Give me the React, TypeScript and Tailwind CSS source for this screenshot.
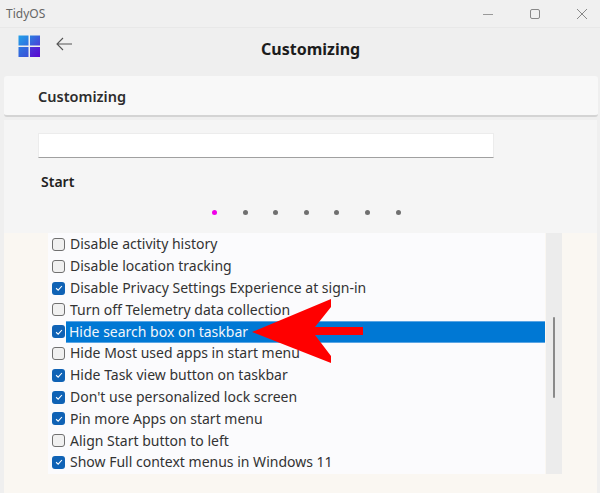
const rows: [string, boolean][] = [
  ["Disable activity history", false],
  ["Disable location tracking", false],
  ["Disable Privacy Settings Experience at sign-in", true],
  ["Turn off Telemetry data collection", false],
  ["Hide search box on taskbar", true],
  ["Hide Most used apps in start menu", false],
  ["Hide Task view button on taskbar", true],
  ["Don't use personalized lock screen", true],
  ["Pin more Apps on start menu", true],
  ["Align Start button to left", false],
  ["Show Full context menus in Windows 11", true],
];

function Check({ on }: { on: boolean }) {
  return on ? (
    <span className="flex h-[13px] w-[13px] shrink-0 items-center justify-center rounded-[3px] bg-[#0f62b5]">
      <svg viewBox="0 0 12 12" className="h-[10px] w-[10px]" fill="none" stroke="#fff" strokeWidth="1.3">
        <path d="M2.5 6.3 5 8.6 9.5 3.6" />
      </svg>
    </span>
  ) : (
    <span className="h-[13px] w-[13px] shrink-0 rounded-[3px] border border-[#707070] bg-[#f0f0f0]" />
  );
}

function Logo() {
  return (
    <svg viewBox="0 0 23 23" className="h-[23px] w-[23px]">
      <defs>
        <linearGradient id="a" x1="0" y1="0" x2="1" y2="1">
          <stop offset="0" stopColor="#22a0e8" />
          <stop offset="1" stopColor="#2f6fe0" />
        </linearGradient>
        <linearGradient id="b" x1="0" y1="0" x2="1" y2="1">
          <stop offset="0" stopColor="#2a7fe0" />
          <stop offset="1" stopColor="#4a3fd8" />
        </linearGradient>
        <linearGradient id="c" x1="0" y1="0" x2="1" y2="1">
          <stop offset="0" stopColor="#2c78e0" />
          <stop offset="1" stopColor="#3c50d8" />
        </linearGradient>
        <linearGradient id="d" x1="0" y1="0" x2="1" y2="1">
          <stop offset="0" stopColor="#4a35d8" />
          <stop offset="1" stopColor="#5a08d0" />
        </linearGradient>
      </defs>
      <rect x="0.5" y="0.5" width="10" height="10" fill="url(#a)" />
      <rect x="12" y="0.5" width="10" height="10" fill="url(#b)" />
      <rect x="0.5" y="12" width="10" height="10" fill="url(#c)" />
      <rect x="12" y="12" width="10" height="10" fill="url(#d)" />
    </svg>
  );
}

export default function App() {
  const font = { fontFamily: '"Noto Sans", sans-serif' };
  return (
    <div style={font} className="relative flex h-[493px] w-[600px] flex-col overflow-hidden bg-[#efefef] text-[#222]">
      <div className="flex h-[28px] shrink-0 items-center border-b border-[#e8e8e8] bg-[#f0f0f0] pl-[6px] text-[12px] text-[#666]">
        <span className="flex-1">TidyOS</span>
        <svg viewBox="0 0 10 10" className="mr-[37px] h-[10px] w-[10px]" stroke="#999" fill="none">
          <path d="M0 5.5h10" />
        </svg>
        <svg viewBox="0 0 10 10" className="mr-[37px] h-[10px] w-[10px]" stroke="#888" fill="none">
          <rect x="0.5" y="0.5" width="9" height="9" rx="1.5" />
        </svg>
        <svg viewBox="0 0 10 10" className="mr-[13px] h-[10px] w-[10px]" stroke="#888" fill="none">
          <path d="M0 0l10 10M10 0L0 10" />
        </svg>
      </div>

      <div className="relative flex h-[48px] shrink-0 items-start pl-[18px] pt-[7px]">
        <Logo />
        <svg viewBox="0 0 16 14" className="ml-[15px] mt-[2px] h-[14px] w-[16px]" fill="none" stroke="#555" strokeWidth="1.1">
          <path d="M16 7H1M7 1 1 7l6 6" />
        </svg>
        <h1 className="absolute left-[261px] top-[9px] text-[16px] font-bold leading-[24px] text-[#1c1c1c]">Customizing</h1>
      </div>

      <div className="ml-[4px] mr-[2px] flex h-[41px] shrink-0 items-center rounded-[3px] border-b-2 border-[#d4d4d4] bg-[#f8f8f8] pl-[34px] pt-[2px] text-[14.5px] font-semibold text-[#2c2c2c]">
        Customizing
      </div>

      <div className="ml-[4px] mr-[3px] mt-[3px] flex flex-1 flex-col bg-[#f5f5f5]">
        <div className="ml-[34px] mt-[13px] h-[25px] w-[456px] shrink-0 border border-[#ececec] border-b-[#a0a0a0] bg-white" />
        <div className="ml-[37px] mt-[14px] text-[14px] font-semibold leading-[20px] text-[#222]">Start</div>
        <div className="ml-[208px] mt-[17px] flex h-[6px] items-center gap-[25.6px]">
          <span className="h-[5px] w-[5px] rounded-full bg-[#f000e8]" />
          {[0, 1, 2, 3, 4, 5].map((i) => (
            <span key={i} className="h-[5px] w-[5px] rounded-full bg-[#707070]" />
          ))}
        </div>

        <div className="mt-[18px] flex flex-1 bg-[#faf7f2]">
          <div className="ml-[44px] flex h-[241px] w-[514px]">
            <div className="flex w-[497px] flex-col bg-[#fbfbfd] pt-[0.6px] text-[14px] text-[#333]">
              {rows.map(([label, on], i) => (
                <div key={label} className="flex h-[21.8px] items-center pl-[4px]">
                  <Check on={on} />
                  <span
                    className={
                      i === 4
                        ? "ml-[1px] flex h-full flex-1 items-center border-y border-[#5aa5e4] bg-[#0078d4] pl-[3px] leading-none text-[#f2f6fa]"
                        : "ml-[5px] whitespace-nowrap leading-none"
                    }
                  >
                    {label}
                  </span>
                </div>
              ))}
            </div>
            <div className="ml-[1px] flex w-[16px] flex-col items-center bg-[#ececec] pt-[84px]">
              <div className="h-[81px] w-[2px] rounded-full bg-[#8a8a8a]" />
            </div>
          </div>
        </div>
      </div>

      <svg viewBox="0 0 600 493" className="pointer-events-none absolute left-0 top-0 h-[493px] w-[600px]">
        <path d="M252 332 331 299v8L315 327h48v8h-48l16 21v7Z" fill="#ff0000" />
      </svg>
    </div>
  );
}
